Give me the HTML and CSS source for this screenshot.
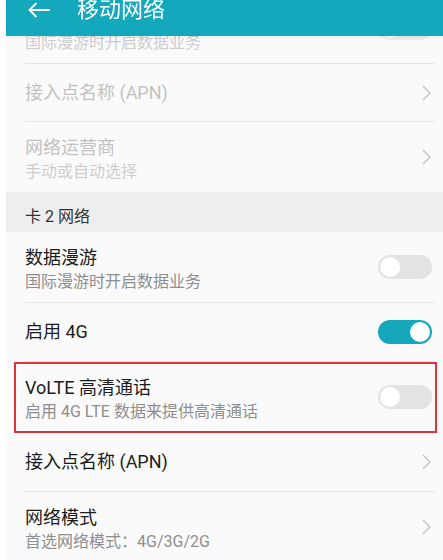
FILE: index.html
```html
<!DOCTYPE html>
<html lang="zh-CN">
<head>
<meta charset="utf-8">
<title>移动网络</title>
<link rel="stylesheet" href="styles.css">
</head>
<body>
<div class="screen">
  <header class="appbar">
    <svg class="back" width="22" height="16" viewBox="0 0 22 16"><path d="M1.5 8H22M8.5 1L1.5 8L8.5 15" fill="none" stroke="#fff" stroke-width="1.8"/></svg>
    <h1 class="appbar-title">移动网络</h1>
  </header>
  <main class="list">
    <div class="row two disabled first">
      <div class="text"><div class="title">数据漫游</div><div class="sub">国际漫游时开启数据业务</div></div>
      <span class="switch"></span>
    </div>
    <div class="divider"></div>
    <div class="row one short disabled">
      <div class="text"><div class="title">接入点名称 (APN)</div></div>
      <svg class="chev" width="9" height="16" viewBox="0 0 9 16"><path d="M1 1L8 8L1 15" fill="none" stroke="currentColor" stroke-width="1.5"/></svg>
    </div>
    <div class="divider"></div>
    <div class="row two disabled">
      <div class="text"><div class="title">网络运营商</div><div class="sub">手动或自动选择</div></div>
      <svg class="chev" width="9" height="16" viewBox="0 0 9 16"><path d="M1 1L8 8L1 15" fill="none" stroke="currentColor" stroke-width="1.5"/></svg>
    </div>
    <div class="section">卡 2 网络</div>
    <div class="row two">
      <div class="text"><div class="title">数据漫游</div><div class="sub">国际漫游时开启数据业务</div></div>
      <span class="switch"></span>
    </div>
    <div class="divider"></div>
    <div class="row one">
      <div class="text"><div class="title">启用 4G</div></div>
      <span class="switch on"></span>
    </div>
    <div class="divider"></div>
    <div class="row two highlight">
      <div class="text"><div class="title">VoLTE 高清通话</div><div class="sub">启用 4G LTE 数据来提供高清通话</div></div>
      <span class="switch"></span>
    </div>
    <div class="divider"></div>
    <div class="row one">
      <div class="text"><div class="title">接入点名称 (APN)</div></div>
      <svg class="chev" width="9" height="16" viewBox="0 0 9 16"><path d="M1 1L8 8L1 15" fill="none" stroke="currentColor" stroke-width="1.5"/></svg>
    </div>
    <div class="divider"></div>
    <div class="row two">
      <div class="text"><div class="title">网络模式</div><div class="sub">首选网络模式：4G/3G/2G</div></div>
      <svg class="chev" width="9" height="16" viewBox="0 0 9 16"><path d="M1 1L8 8L1 15" fill="none" stroke="currentColor" stroke-width="1.5"/></svg>
    </div>
  </main>
</div>
</body>
</html>
```
FILE: styles.css
```css
html, body {
  margin: 0;
  padding: 0;
  background: #ffffff;
  overflow: hidden;
}
body {
  font-family: Roboto, "Noto Sans CJK SC", sans-serif;
  color: #1c1c1c;
}
.screen {
  margin-left: 6px;
  background: #fafafa;
  min-height: 560px;
}
.appbar {
  position: fixed;
  top: 0;
  left: 6px;
  right: 0;
  height: 36px;
  box-sizing: border-box;
  padding: 0 0 16px 22px;
  display: flex;
  align-items: center;
  background: #13a8bc;
  box-shadow: 0 1px 3px rgba(0,0,0,0.08);
  z-index: 2;
}
.back {
  display: block;
  flex: none;
}
.appbar-title {
  margin: 0 0 0 27px;
  font-size: 22px;
  font-weight: 400;
  line-height: 24px;
  color: #ffffff;
  letter-spacing: 0;
}
.list {
  display: flex;
  flex-direction: column;
}
.row {
  display: flex;
  align-items: center;
  justify-content: space-between;
  box-sizing: border-box;
  padding: 0 11px 0 19px;
}
.row.one {
  height: 58px;
}
.row.one.short {
  height: 57px;
}
.row.two {
  height: 70px;
}
.row.first {
  margin-top: -7px;
}
.text {
  display: flex;
  flex-direction: column;
}
.row.two .text {
  align-self: flex-start;
  padding-top: 14px;
}
.title {
  font-size: 18px;
  line-height: 24px;
  color: #1c1c1c;
}
.sub {
  font-size: 16px;
  line-height: 24px;
  color: #8e8e8e;
}
.disabled .title {
  color: #c2c2c2;
}
.disabled .sub {
  color: #cdcdcd;
}
.divider {
  height: 1px;
  background: #e6e6e6;
  margin: 0 8px 0 19px;
}
.section {
  height: 40px;
  box-sizing: border-box;
  padding: 15px 0 0 19px;
  font-size: 16px;
  line-height: 20px;
  color: #333333;
  background: #eeeeee;
}
.chev {
  display: block;
  flex: none;
  margin-right: 1px;
  color: #c6c6c6;
}
.switch {
  position: relative;
  flex: none;
  width: 54px;
  height: 24px;
  border-radius: 12px;
  background: #e3e3e3;
}
.switch::after {
  content: "";
  position: absolute;
  top: 2px;
  left: 2px;
  width: 20px;
  height: 20px;
  border-radius: 50%;
  background: #ffffff;
}
.switch.on {
  background: #14a7ba;
}
.switch.on::after {
  left: 32px;
}
.disabled .switch {
  background: #ececec;
}
.highlight {
  position: relative;
}
.highlight::after {
  content: "";
  position: absolute;
  left: 8px;
  right: 6px;
  top: 0;
  bottom: -1px;
  border: 2px solid #d9363c;
  pointer-events: none;
}
```
